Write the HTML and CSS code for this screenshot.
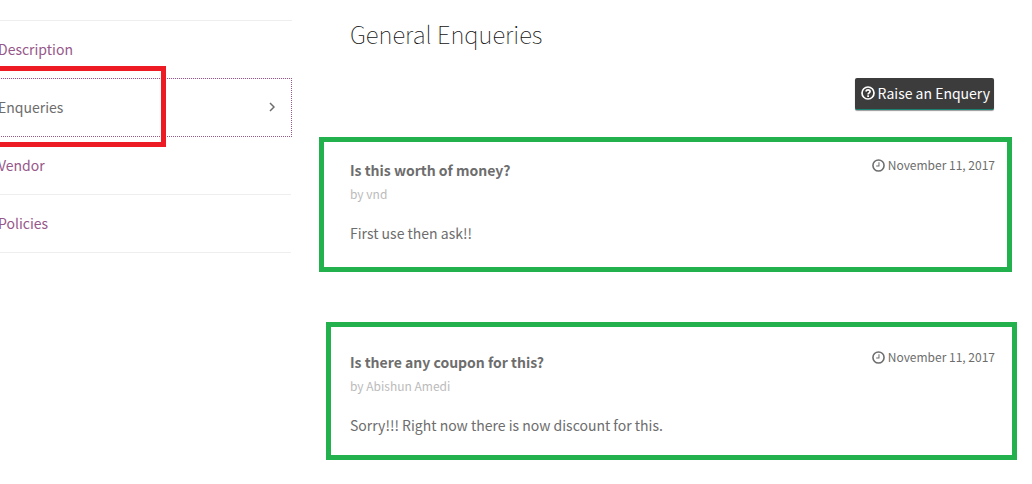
FILE: index.html
```html
<!DOCTYPE html>
<html lang="en">
<head>
    <meta charset="UTF-8">
    <meta name="viewport" content="width=device-width, initial-scale=1.0">
    <title>General Enqueries</title>
    <link rel="stylesheet" href="styles.css">
</head>
<body>
    <div class="product-tabs">
        <nav class="tabs">
            <ul>
                <li><a href="#description">Description</a></li>
                <li class="active">
                    <a href="#enqueries">Enqueries
                        <svg class="arrow" viewBox="0 0 6 10"><path d="M1 1l4 4-4 4"/></svg>
                    </a>
                    <span class="mark mark-tab"></span>
                </li>
                <li><a href="#vendor">Vendor</a></li>
                <li><a href="#policies">Policies</a></li>
            </ul>
        </nav>

        <main class="panel" id="enqueries">
            <h2>General Enqueries</h2>
            <div class="actions">
                <button type="button" class="raise">
                    <svg class="icon" viewBox="0 0 14 14">
                        <circle cx="7" cy="7" r="6"/>
                        <path d="M4.9 5.500C5.200 4.300 6 3.900 7 3.900c1.200 0 2.100.7 2.100 1.700C9.100 6.900 7.100 6.900 7.100 8.400M7.100 9.300v1.700"/>
                    </svg>
                    Raise an Enquery
                </button>
            </div>

            <!-- Enquiries -->
            <article class="enquery">
                <div class="top">
                    <h3>Is this worth of money?</h3>
                    <time datetime="2017-11-11">
                        <svg class="icon" viewBox="0 0 14 14">
                            <circle cx="7" cy="7" r="6"/>
                            <path class="hands" d="M7.500 3.500v4H4.500"/>
                        </svg>
                        November 11, 2017
                    </time>
                </div>
                <p class="author">by vnd</p>
                <p class="reply">First use then ask!!</p>
                <span class="mark mark-first"></span>
            </article>

            <article class="enquery">
                <div class="top">
                    <h3>Is there any coupon for this?</h3>
                    <time datetime="2017-11-11">
                        <svg class="icon" viewBox="0 0 14 14">
                            <circle cx="7" cy="7" r="6"/>
                            <path class="hands" d="M7.500 3.500v4H4.500"/>
                        </svg>
                        November 11, 2017
                    </time>
                </div>
                <p class="author">by Abishun Amedi</p>
                <p class="reply">Sorry!!! Right now there is now discount for this.</p>
                <span class="mark mark-second"></span>
            </article>
        </main>
    </div>
</body>
</html>
```
FILE: styles.css
```css
* {
    box-sizing: border-box;
}

body {
    font-family: "Source Sans Pro", "Noto Sans CJK SC", sans-serif;
    font-size: 14px;
    line-height: 24px;
    margin: 0;
    color: #6d6d6d;
    background: #fff;
}

h2, h3, p, ul {
    margin: 0;
    padding: 0;
}

.product-tabs {
    display: flex;
    gap: 58px;
    padding: 20px 37px 40px 0;
}

/* Tabs */
.tabs {
    flex: 0 0 292px;
}

.tabs ul {
    list-style: none;
    margin-left: -2px;
    border-top: 1px solid #eeeeee;
}

.tabs li {
    position: relative;
    padding-right: 1px;
}

.tabs a {
    display: flex;
    justify-content: space-between;
    align-items: center;
    height: 58px;
    padding: 0 16px 2px 0;
    border-bottom: 1px solid #eeeeee;
    color: #96588a;
    text-decoration: none;
}

.tabs .active a {
    height: 59px;
    margin: -1px -1px 0 0;
    border: 1px dotted #96588a;
    border-left: none;
    color: #6d6d6d;
}

.arrow {
    width: 6px;
    height: 10px;
    fill: none;
    stroke: #6d6d6d;
    stroke-width: 1.5;
}

/* Enquiries panel */
.panel {
    flex: 1;
    min-width: 0;
}

h2 {
    font-size: 24px;
    font-weight: 100;
    line-height: 28px;
    color: #111;
}

.actions {
    display: flex;
    justify-content: flex-end;
    margin: 30px 1px 48px 0;
}

.raise {
    display: flex;
    align-items: center;
    gap: 3px;
    height: 32px;
    padding: 0 4px 2px 6px;
    font: inherit;
    color: #fff;
    background: #3c3c3c;
    border: none;
    border-bottom: 1px solid #1c8072;
    border-radius: 2px;
    box-shadow: 0 1px 1px rgba(0, 0, 0, 0.4);
    cursor: pointer;
}

.icon {
    width: 14px;
    height: 14px;
    fill: none;
    stroke: currentColor;
    stroke-width: 1.7;
}

.hands {
    stroke-width: 1.1;
}

.enquery {
    position: relative;
    margin-bottom: 105px;
}

.enquery:last-child {
    margin-bottom: 0;
}

.top {
    display: flex;
    justify-content: space-between;
    align-items: flex-start;
}

h3 {
    font-size: 14px;
    font-weight: 700;
}

time {
    display: flex;
    align-items: center;
    gap: 3px;
    font-size: 12px;
    line-height: 14px;
}

time .icon {
    width: 13px;
    height: 13px;
}

.author {
    font-size: 12px;
    color: #bbb;
}

.reply {
    margin-top: 15px;
}

/* Highlight boxes */
.mark {
    position: absolute;
    border: 5px solid #22b14c;
    pointer-events: none;
}

.mark-tab {
    top: -12px;
    left: -3px;
    width: 171px;
    height: 81px;
    border-color: #ed1c24;
}

.mark-first {
    inset: -21px -17px -27px -31px;
}

.mark-second {
    inset: -28px -22px -23px -24px;
}
```
